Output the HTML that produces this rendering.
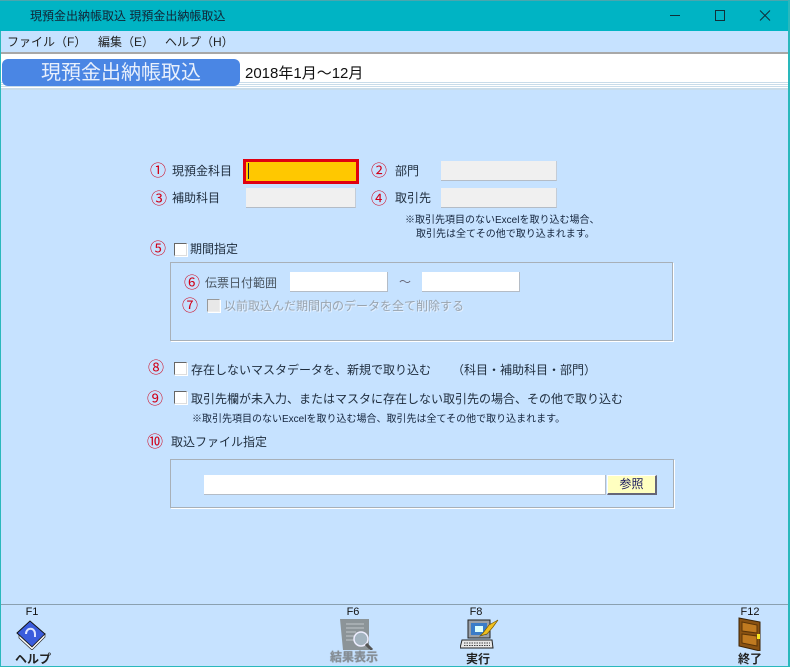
<!DOCTYPE html>
<html lang="ja"><head><meta charset="utf-8"><style>
html,body{margin:0;padding:0}
body{width:791px;height:668px;position:relative;overflow:hidden;background:#c6e2ff;font-family:"Liberation Sans","Noto Sans CJK JP",sans-serif;font-size:12px;color:#1c2a3a}
div{position:absolute;white-space:nowrap}
.t{font-size:12px;line-height:16px;color:#1e2c3c}
.n{color:#d00018;font-size:16px;line-height:16px;width:16px;text-align:center;margin-top:2px}
.inp{background:#f0f0f0;border-bottom:1px solid #b4bcc6;border-right:1px solid #c4ccd6;box-sizing:border-box}
.w{background:#fff;border-bottom:1px solid #b4bcc6;border-right:1px solid #b4bcc6;box-sizing:border-box}
.cb{width:11px;height:11px;background:#fff;border:1px solid #666;border-right-color:#ddd;border-bottom-color:#ddd;box-shadow:1px 1px 0 #fff}
.grp{box-sizing:border-box;border:1px solid #a8b0b8;box-shadow:1px 1px 0 #fff}
.s{font-size:10px;line-height:13px;color:#14243c}
.f{font-size:11px;line-height:12px;color:#111;text-align:center}
.b{font-weight:bold;font-size:11px;line-height:14px;text-align:center;color:#222}
</style></head><body>
<div style="left:0;top:0;width:790px;height:31px;background:#00b4c4;border-top:1px solid #4aa6ae;box-sizing:border-box"></div>
<div class="t" style="left:30px;top:8px;font-size:12px;color:#123">現預金出納帳取込 現預金出納帳取込</div>
<svg style="position:absolute;left:660px;top:5px" width="125" height="22" fill="none" stroke="#10303a" stroke-width="1"><path d="M10 10.500H20M55.500 5.500h9v10h-9zM100 5.500l10 10M110 5.500l-10 10"/></svg>
<div style="left:0;top:31px;width:790px;height:21px;background:#c6e2ff"></div>
<div class="t" style="left:7px;top:34px;font-size:12px;color:#222">ファイル（F）</div>
<div class="t" style="left:98px;top:34px;font-size:12px;color:#222">編集（E）</div>
<div class="t" style="left:165px;top:34px;font-size:12px;color:#222">ヘルプ（H）</div>
<div style="left:0;top:52px;width:790px;height:2px;background:#a8a8a8"></div>
<div style="left:0;top:54px;width:790px;height:36px;background:#fff"></div>
<div style="left:0;top:82px;width:790px;height:1px;background:#c8dcea"></div>
<div style="left:0;top:84px;width:790px;height:1px;background:#c8dcea"></div>
<div style="left:0;top:86px;width:790px;height:1px;background:#c8dcea"></div>
<div style="left:0;top:88px;width:790px;height:2px;background:#c8dcea"></div>
<div style="left:2px;top:59px;width:238px;height:27px;background:#4a86e4;border-radius:6px;color:#e8f0fc;font-size:20px;line-height:28px;text-align:center">現預金出納帳取込</div>
<div style="left:245px;top:65px;font-size:15px;line-height:17px;color:#111">2018年1月～12月</div>

<div class="n" style="left:150px;top:162px">①</div>
<div class="t" style="left:172px;top:163px">現預金科目</div>
<div style="left:243px;top:159px;width:116px;height:25px;box-sizing:border-box;background:#ffc800;border:3px solid #e00010"></div>
<div style="left:248px;top:163px;width:1px;height:16px;background:#223"></div>
<div class="n" style="left:371px;top:162px">②</div>
<div class="t" style="left:395px;top:163px">部門</div>
<div class="inp" style="left:441px;top:161px;width:116px;height:20px"></div>
<div class="n" style="left:151px;top:190px">③</div>
<div class="t" style="left:172px;top:190px">補助科目</div>
<div class="inp" style="left:246px;top:188px;width:110px;height:20px"></div>
<div class="n" style="left:371px;top:190px">④</div>
<div class="t" style="left:395px;top:190px">取引先</div>
<div class="inp" style="left:441px;top:188px;width:116px;height:20px"></div>
<div class="s" style="left:405px;top:214px">※取引先項目のないExcelを取り込む場合、</div>
<div class="s" style="left:416px;top:228px">取引先は全てその他で取り込まれます。</div>

<div class="n" style="left:150px;top:240px">⑤</div>
<div class="cb" style="left:174px;top:243px"></div>
<div class="t" style="left:190px;top:241px">期間指定</div>
<div class="grp" style="left:170px;top:262px;width:503px;height:79px"></div>
<div class="n" style="left:184px;top:274px">⑥</div>
<div class="t" style="left:205px;top:275px;color:#4a5662">伝票日付範囲</div>
<div class="w" style="left:290px;top:272px;width:98px;height:20px"></div>
<div class="t" style="left:399px;top:274px;color:#667">～</div>
<div class="w" style="left:422px;top:272px;width:98px;height:20px"></div>
<div class="n" style="left:182px;top:297px">⑦</div>
<div class="cb" style="left:207px;top:299px;background:#e8e8e8;border-color:#999 #eee #eee #999"></div>
<div class="t" style="left:224px;top:298px;color:#9aa4ae;text-shadow:1px 1px 0 #e4f0ff">以前取込んだ期間内のデータを全て削除する</div>

<div class="n" style="left:148px;top:359px">⑧</div>
<div class="cb" style="left:174px;top:362px"></div>
<div class="t" style="left:191px;top:362px">存在しないマスタデータを、新規で取り込む</div>
<div class="t" style="left:452px;top:362px">（科目・補助科目・部門）</div>
<div class="n" style="left:147px;top:390px">⑨</div>
<div class="cb" style="left:174px;top:391px"></div>
<div class="t" style="left:191px;top:391px">取引先欄が未入力、またはマスタに存在しない取引先の場合、その他で取り込む</div>
<div class="s" style="left:192px;top:413px">※取引先項目のないExcelを取り込む場合、取引先は全てその他で取り込まれます。</div>
<div class="n" style="left:147px;top:433px">⑩</div>
<div class="t" style="left:171px;top:434px">取込ファイル指定</div>
<div class="grp" style="left:170px;top:459px;width:504px;height:49px"></div>
<div class="w" style="left:204px;top:475px;width:402px;height:20px"></div>
<div style="left:607px;top:475px;width:50px;height:20px;box-sizing:border-box;background:#ffffc0;border:1px solid #fff;border-right:2px solid #667;border-bottom:2px solid #667;font-size:12px;line-height:17px;text-align:center;color:#14145c">参照</div>

<div style="left:0;top:604px;width:790px;height:1px;background:#8aa0b0"></div>
<div style="left:0;top:666px;width:790px;height:1px;background:#2ab8bc"></div>
<div style="left:0;top:667px;width:791px;height:1px;background:#fff"></div>
<div style="left:788px;top:0;width:2px;height:667px;background:#2ab8bc"></div>
<div style="left:790px;top:0;width:1px;height:668px;background:#fff"></div>
<div style="left:0;top:31px;width:1px;height:636px;background:#2ab8bc"></div>

<div class="f" style="left:20px;top:606px;width:24px">F1</div>
<svg style="position:absolute;left:16px;top:620px" width="32" height="30"><path d="M1 13L14 1l15 13-13 13z" fill="#3a5cdc" stroke="#111"/><path d="M3 15l13 12 13-13v3L16 30 3 18z" fill="#fff" stroke="#222" stroke-width=".7"/><path d="M10 14c0-7 9-7 9 0v3" stroke="#dde4ff" stroke-width="2" fill="none"/></svg>
<div class="b" style="left:8px;top:652px;width:50px;font-size:12px">ヘルプ</div>

<div class="f" style="left:341px;top:606px;width:24px">F6</div>
<svg style="position:absolute;left:340px;top:618px" width="34" height="32"><path d="M0 1h29v31H3z" fill="#8c9498"/><path d="M6 6h18M6 10h18M6 14h10M6 18h8M6 22h8" stroke="#c0c6ca"/><circle cx="21" cy="21" r="7" fill="#a4b4c0" stroke="#eef" stroke-width="1.500"/><path d="M26 26l6 6" stroke="#555" stroke-width="3"/></svg>
<div class="b" style="left:324px;top:650px;width:60px;font-size:12px;color:#858d94;text-shadow:0 0 1px #858d94">結果表示</div>

<div class="f" style="left:464px;top:606px;width:24px">F8</div>
<svg style="position:absolute;left:460px;top:618px" width="40" height="32"><rect x="8" y="2" width="22" height="18" fill="#9aa0a8" stroke="#222"/><rect x="11" y="5" width="16" height="12" fill="#3a7cc8"/><rect x="15" y="8" width="8" height="6" fill="#dff"/><path d="M2 22h30l1 8H0z" fill="#e8e8e8" stroke="#222"/><path d="M4 25h26M4 27.500h26" stroke="#444" stroke-dasharray="1.500 1"/><path d="M38 2l-9 5-6 8-3 3 7-2 6-7z" fill="#f0c020" stroke="#7a5a00" stroke-width=".7"/></svg>
<div class="b" style="left:453px;top:652px;width:50px;font-size:12px">実行</div>

<div class="f" style="left:738px;top:606px;width:24px">F12</div>
<svg style="position:absolute;left:738px;top:617px" width="24" height="34"><path d="M1 1l21 4v29L1 29z" fill="#8a5212" stroke="#3a2206"/><path d="M4 5l15 3v8L4 14zM4 17l15 2v10L4 26z" fill="#c07a20" stroke="#5a3408"/><rect x="19" y="17" width="3" height="5" fill="#f8e820"/></svg>
<div class="b" style="left:725px;top:652px;width:50px;font-size:12px">終了</div>
</body></html>
